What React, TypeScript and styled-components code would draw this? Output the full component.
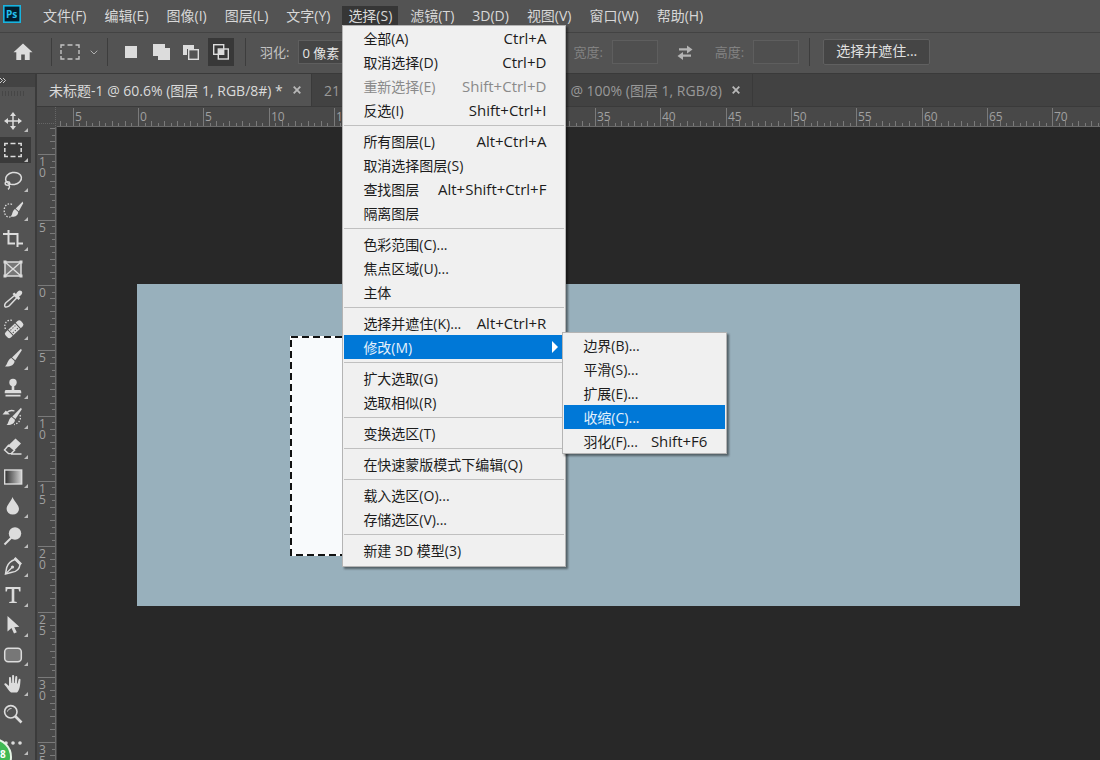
import React, { useEffect, useState } from "react";
import styled, { createGlobalStyle, css } from "styled-components";

const GlobalStyle = createGlobalStyle`
  *, *::before, *::after { box-sizing: border-box; }
  body {
    margin: 0;
    background: #282828;
    font-family: "Open Sans", "Noto Sans CJK SC", sans-serif;
    font-size: 14px;
    color: #d8d8d8;
  }
  button, input { font: inherit; color: inherit; }
  button { background: none; border: 0; padding: 0; margin: 0; }
`;

const App = styled.div`
  display: flex;
  flex-direction: column;
  height: 100vh;
  overflow: hidden;
`;

/* ---------- menu bar ---------- */

const MenuBar = styled.nav`
  display: flex;
  align-items: flex-end;
  height: 33px;
  flex: none;
  gap: 6px;
  padding: 0 4px 7px 3px;
  background: #535353;
  border-bottom: 1px solid #434343;
`;

const Logo = styled.svg`
  display: block;
  width: 18px;
  height: 18px;
  margin: 0 10px 2px 0;
`;

const MenuSlot = styled.div`
  position: relative;
`;

const MenuTitle = styled.button<{ $open?: boolean }>`
  display: block;
  height: 19px;
  padding: 0 6px;
  line-height: 16px;
  white-space: nowrap;
  background: ${(p) => (p.$open ? "#363636" : "transparent")};
`;

const MenuPanel = styled.div`
  position: absolute;
  z-index: 10;
  top: 19px;
  left: 0;
  width: 224px;
  padding: 0 1px 4px;
  background: #f0f0f0;
  border: 1px solid #b4b4b4;
  box-shadow: 2px 2px 2px rgba(0, 0, 0, 0.45);
  color: #1c1c1c;
`;

const SubPanel = styled(MenuPanel)`
  top: -3px;
  left: 218px;
  width: 165px;
  padding: 0 1px;
`;

const ItemSlot = styled.div`
  position: relative;
`;

const MenuItem = styled.button<{ $active?: boolean }>`
  display: flex;
  justify-content: space-between;
  align-items: center;
  width: 100%;
  height: 24px;
  padding: 0 18px 0 19px;
  white-space: nowrap;
  text-align: left;
  &:disabled { color: #8a8a8a; }
  ${(p) =>
    p.$active &&
    css`
      background: #0078d7;
      color: #e4f1fc;
    `}
`;

const Shortcut = styled.kbd`
  font: inherit;
  font-size: 15px;
`;

const Arrow = styled.svg`
  display: block;
  width: 6px;
  height: 12px;
  margin-right: -12px;
  fill: #fff;
`;

const MenuRule = styled.hr`
  height: 1px;
  margin: 3px 0;
  border: 0;
  background: #c0c0c0;
`;

/* ---------- options bar ---------- */

const OptionsBar = styled.div`
  display: flex;
  align-items: center;
  flex: none;
  height: 41px;
  padding: 0 0 2px 10px;
  background: #535353;
  border-bottom: 1px solid #3a3a3a;
  white-space: nowrap;
`;

const Divider = styled.span<{ $before: number; $after: number }>`
  width: 1px;
  height: 28px;
  margin: 0 ${(p) => p.$after}px 0 ${(p) => p.$before}px;
  background: #3d3d3d;
`;

const IconButton = styled.button<{ $on?: boolean; $narrow?: boolean }>`
  display: grid;
  place-items: center;
  width: ${(p) => (p.$narrow ? 22 : 26)}px;
  height: 28px;
  background: ${(p) => (p.$on ? "#383838" : "transparent")};
`;

const ModeGroup = styled.div`
  display: flex;
  gap: 4px;
`;

const SwapSlot = styled.div`
  padding: 0 17px 0 14px;
`;

const Field = styled.label<{ $dim?: boolean }>`
  display: flex;
  align-items: center;
  gap: 9px;
  font-size: 13px;
  line-height: 16px;
  color: ${(p) => (p.$dim ? "#828282" : "#c4c4c4")};
`;

const FieldInput = styled.input<{ $w: number }>`
  width: ${(p) => p.$w}px;
  height: 24px;
  padding: 0 3px;
  font-size: 13px;
  color: #e6e6e6;
  background: ${(p) => (p.disabled ? "#4f4f4f" : "#454545")};
  border: 1px solid #5e5e5e;
  border-radius: 0;
`;

const FeatherGap = styled.span`
  width: 215px;
`;

const MaskButton = styled.button`
  height: 26px;
  padding: 0 12px 2px;
  line-height: 20px;
  color: #e0e0e0;
  background: #454545;
  border: 1px solid #606060;
  border-radius: 2px;
`;

/* ---------- workspace ---------- */

const Workspace = styled.div`
  display: flex;
  flex: 1;
  min-height: 0;
`;

const ToolColumn = styled.aside`
  position: relative;
  display: flex;
  flex-direction: column;
  flex: none;
  width: 37px;
  background: #535353;
  border-right: 2px solid #3b3b3b;
`;

const ToolHeader = styled.div`
  height: 13px;
  background: #434343;
`;

const Grip = styled.div`
  width: 23px;
  height: 5px;
  margin: 4px 0 10px 2px;
  background: repeating-linear-gradient(90deg, #464646 0 1px, #535353 1px 3px);
`;

const Tool = styled.button<{ $on?: boolean }>`
  position: relative;
  display: grid;
  place-items: center;
  flex: none;
  width: 31px;
  height: 30px;
  padding-right: 5px;
  &:nth-of-type(3n + 1) { height: 29px; }
  ${(p) =>
    p.$on &&
    css`
      background: linear-gradient(#3a3a3a, #3a3a3a) 0 2px / 100% 26px no-repeat;
    `}
`;

const Corner = styled.i`
  position: absolute;
  right: 3px;
  bottom: 3px;
  border: 2px solid transparent;
  border-right-color: #bdbdbd;
  border-bottom-color: #bdbdbd;
`;

const Badge = styled.div`
  position: absolute;
  left: -26px;
  bottom: -16px;
  width: 38px;
  height: 38px;
  padding: 5px 0 0 24px;
  border: 2px solid #e6f5e6;
  border-radius: 50%;
  background: #3fba55;
  font-size: 10px;
  font-weight: 700;
  line-height: 18px;
  color: #fff;
`;

const Documents = styled.main`
  display: flex;
  flex-direction: column;
  flex: 1;
  min-width: 0;
`;

const Tabs = styled.div`
  display: flex;
  flex: none;
  height: 33px;
  background: #424242;
  border-bottom: 1px solid #3a3a3a;
`;

const Tab = styled.div<{ $on?: boolean; $w: number }>`
  display: flex;
  align-items: center;
  flex: none;
  width: ${(p) => p.$w}px;
  padding: 0 12px;
  gap: 10px;
  white-space: nowrap;
  border-right: 1px solid #3a3a3a;
  color: ${(p) => (p.$on ? "#dadada" : "#999")};
  background: ${(p) => (p.$on ? "#535353" : "transparent")};
`;

const TabText = styled.span`
  flex: none;
`;

const TabSpacer = styled.span`
  flex: 1;
`;

const CloseButton = styled.button`
  display: block;
  flex: none;
  color: #b8b8b8;
`;

const RulerTop = styled.svg`
  display: block;
  flex: none;
  width: 100%;
  height: 20px;
  background: #484848;
`;

const CanvasRow = styled.div`
  display: flex;
  flex: 1;
  min-height: 0;
`;

const RulerSide = styled.svg`
  display: block;
  flex: none;
  width: 20px;
  height: 100%;
  background: #484848;
`;

const Canvas = styled.div`
  flex: 1;
  padding: 157px 80px 0;
  background: #282828;
`;

const Artboard = styled.div`
  height: 322px;
  padding: 52px 0 0 153px;
  background: #98b0bc;
`;

const Selection = styled.svg`
  display: block;
  width: 240px;
  height: 220px;
`;

/* ---------- rulers ---------- */

const STEP = 65.3;
const TICK = "#7a7a7a";
const LABEL = "#a0a0a0";

function useWindowSize() {
  const [size, setSize] = useState({ w: window.innerWidth, h: window.innerHeight });
  useEffect(() => {
    const update = () => setSize({ w: window.innerWidth, h: window.innerHeight });
    window.addEventListener("resize", update);
    return () => window.removeEventListener("resize", update);
  }, []);
  return size;
}

function TopRuler({ length }: { length: number }) {
  const zero = 101;
  const ticks: React.ReactNode[] = [];
  for (let i = -12; zero + (i * STEP) / 10 < length; i++) {
    const x = Math.round(zero + (i * STEP) / 10);
    const major = i % 10 === 0;
    const top = major ? 1 : i % 2 === 0 ? 14 : 16;
    ticks.push(<rect key={i} x={x} y={top} width="1" height={19 - top} fill={TICK} />);
    if (major)
      ticks.push(
        <text key={"t" + i} x={x + 2} y="14" fontSize="12" fill={LABEL}>
          {Math.abs(i / 2)}
        </text>
      );
  }
  return (
    <RulerTop aria-hidden="true">
      {ticks}
      <path d="M18.5 0v20M0 16.5h20" stroke="#666" strokeDasharray="1 1" />
      <rect x="20" y="19" width="100%" height="1" fill="#6a6a6a" />
    </RulerTop>
  );
}

function SideRuler({ length }: { length: number }) {
  const zero = 158;
  const marks: React.ReactNode[] = [];
  for (let i = -24; zero + (i * STEP) / 10 < length; i++) {
    const y = Math.round(zero + (i * STEP) / 10);
    const major = i % 10 === 0;
    const left = major ? 1 : i % 2 === 0 ? 13 : 15;
    marks.push(<rect key={i} x={left} y={y} width={18 - left} height="1" fill={TICK} />);
    if (major)
      String(Math.abs(i / 2))
        .split("")
        .forEach((c, k) =>
          marks.push(
            <text key={i + "t" + k} x="2" y={y + 12 + k * 11} fontSize="12" fill={LABEL}>
              {c}
            </text>
          )
        );
  }
  return (
    <RulerSide aria-hidden="true">
      {marks}
      <rect x="18" y="0" width="1" height="100%" fill="#6a6a6a" />
    </RulerSide>
  );
}

/* ---------- tool icons ---------- */

const I = "#dcdcdc";

const tools: { name: string; art: React.ReactNode; flat?: boolean; on?: boolean }[] = [
  {
    name: "移动工具",
    art: (
      <>
        <path d="M10 3v14M3 10h14" stroke={I} strokeWidth="1.5" />
        <path d="M10 1l3 4H7zM10 19l3-4H7zM1 10l4-3v6zM19 10l-4-3v6z" fill={I} />
      </>
    ),
  },
  {
    name: "矩形选框工具",
    on: true,
    art: (
      <path
        d="M1.800 6V3.500H5M7.500 3.500h5M15 3.500h3.200V6M18.200 8v4M18.200 14v2.500H15M12.500 16.500h-5M5 16.500H1.800V14M1.800 12V8"
        stroke={I}
        strokeWidth="1.500"
        fill="none"
      />
    ),
  },
  {
    name: "套索工具",
    art: (
      <g stroke={I} strokeWidth="1.5" fill="none">
        <ellipse cx="10.500" cy="8.500" rx="8" ry="6" transform="rotate(-10 10.500 8.500)" />
        <ellipse cx="4.500" cy="13.500" rx="2.300" ry="1.700" />
        <path d="M5.500 15c1.500 1 1.300 3-.5 4.300" />
      </g>
    ),
  },
  {
    name: "快速选择工具",
    art: (
      <>
        <path d="M9 4.500C5 2.500 1.200 5.500 1.200 10.500S5 18.500 8 16.500" stroke={I} strokeWidth="1.300" strokeDasharray="1.500 1.500" fill="none" />
        <path d="M19.800 1.500l.3 2-4.300 7.800-3.100-2.800z" fill={I} />
        <path d="M12 9l3.200 2.900c0 3.800-4 5.600-7.700 4.600 2.200-1.700 1.500-5.500 4.500-7.500z" fill={I} />
      </>
    ),
  },
  {
    name: "裁剪工具",
    art: <path d="M0 5h14.500v13M5.500 1v13.500H12M15 14.500h5" stroke={I} strokeWidth="2" fill="none" />,
  },
  {
    name: "图框工具",
    flat: true,
    art: (
      <>
        <rect x="2" y="3" width="16" height="14" fill="#777" stroke={I} strokeWidth="1.500" />
        <path d="M2 3l16 14M18 3L2 17" stroke={I} strokeWidth="1.400" />
        <path d="M0.500 1.500h3v3h-3zM16.500 1.500h3v3h-3zM0.500 15.500h3v3h-3zM16.500 15.500h3v3h-3z" fill={I} />
      </>
    ),
  },
  {
    name: "吸管工具",
    art: (
      <>
        <path d="M11.500 6.500l2.300 2.300-7.500 8c-1 1-3.500 1.600-4.300.9-.8-.8-.1-3 .9-4z" fill="none" stroke={I} strokeWidth="1.500" />
        <path d="M9.500 5l1.700-1.500L13 5c1.500-3 3.500-4.500 5.500-3 1.600 1.700.5 4-2.500 5.500l1.200 1.800-1.700 1.700z" fill={I} />
      </>
    ),
  },
  {
    name: "污点修复画笔工具",
    art: (
      <>
        <path d="M2.500 11C0 6 4.500.5 9.500 2.500" stroke={I} strokeWidth="1.300" strokeDasharray="1.500 1.500" fill="none" />
        <g transform="rotate(-43 11 11)">
          <rect x="0.500" y="7.500" width="21" height="7.500" rx="2.500" fill={I} />
          <path d="M6 7v8.500M16 7v8.500" stroke="#535353" strokeWidth="1" />
          <path d="M7.500 9.500h7M7.500 13h7" stroke="#535353" strokeWidth="1" strokeDasharray="1.300 1.500" />
        </g>
      </>
    ),
  },
  {
    name: "画笔工具",
    art: (
      <>
        <path d="M18 .8l.8 1.500-6.500 10-3.300-2.900z" fill={I} />
        <path d="M8.300 10.100l3.200 2.800c.3 3.800-4.500 6.100-9.500 5.600 2.800-2 2.300-6.700 6.300-8.400z" fill={I} />
      </>
    ),
  },
  {
    name: "仿制图章工具",
    art: (
      <>
        <circle cx="10" cy="4.500" r="3.700" fill={I} />
        <path d="M8.700 7h2.600v5H17c1 0 1.300 1 1.300 3.300H1.700C1.700 13 2 12 3 12h5.700zM2.500 16.800h15v1.700h-15z" fill={I} />
      </>
    ),
  },
  {
    name: "历史记录画笔工具",
    art: (
      <>
        <path d="M-.5 7.500l3.300-4 4 4z" fill={I} />
        <path d="M4 5.500c2-2 5-2.300 7.500-1.500" stroke={I} strokeWidth="1.300" fill="none" />
        <path d="M17 8c1.500 4-1 8.500-6 9.500" stroke={I} strokeWidth="1.300" strokeDasharray="1.500 1.500" fill="none" />
        <path d="M18 .8l.8 1.400-6.300 9.900-3.200-2.700z" fill={I} />
        <path d="M8.700 10l3.200 2.800c.2 3.800-4.400 5.700-8.400 5.200 2.500-2 1.700-6.200 5.200-8z" fill={I} />
      </>
    ),
  },
  {
    name: "橡皮擦工具",
    art: (
      <>
        <path d="M12.500 1.500l5.500 5-6.500 6.800-6-5z" fill={I} />
        <path d="M5.500 8.300l6 5-3.200 3.300H5.500l-4-3.600zM8 17h10.500" fill="none" stroke={I} strokeWidth="1.400" />
      </>
    ),
  },
  {
    name: "渐变工具",
    art: (
      <>
        <defs>
          <linearGradient id="toolGradient">
            <stop offset="0" stopColor="#2d2d2d" />
            <stop offset="1" stopColor="#d4d4d4" />
          </linearGradient>
        </defs>
        <rect x="1.700" y="3" width="17" height="14" fill="url(#toolGradient)" stroke={I} strokeWidth="1.400" />
      </>
    ),
  },
  { name: "模糊工具", art: <path d="M9.500 1c1.800 4.500 6.500 8 6.500 12a6.200 5.500 0 0 1-12.400 0C3.600 9 8 5.500 9.500 1z" fill={I} /> },
  {
    name: "减淡工具",
    art: (
      <>
        <circle cx="12" cy="7.500" r="6.200" fill={I} />
        <path d="M8.500 11.500L1.500 18.500" stroke={I} strokeWidth="2" />
      </>
    ),
  },
  {
    name: "钢笔工具",
    art: (
      <>
        <path d="M12 3.500l5 5c-.5 4.500-3.500 7.300-8 7.800L2.500 18l1.200-6.500c1.300-4 4.300-6.800 8.300-8z" fill="none" stroke={I} strokeWidth="1.500" />
        <path d="M12.500 1l6.500 6.500-1.700 1.700-6.500-6.500z" fill={I} />
        <path d="M3 17.500l6-6" stroke={I} strokeWidth="1.200" />
        <circle cx="9.500" cy="11" r="1.600" fill={I} />
      </>
    ),
  },
  {
    name: "文字工具",
    art: <path d="M2.500 2h15v4.500h-1.300l-.7-2.600h-4.200v12.600l2.500.5V18H6.200v-1l2.500-.5V3.900H4.500l-.7 2.600H2.500z" fill={I} />,
  },
  { name: "路径选择工具", art: <path d="M4.500 1v15.500l4-3.500 2.500 5.500 2.800-1.300-2.500-5 5-.5z" fill={I} /> },
  {
    name: "圆角矩形工具",
    art: <rect x="1.700" y="3.200" width="16.600" height="13.600" rx="3.500" fill="#777" stroke={I} strokeWidth="1.500" />,
  },
  {
    name: "抓手工具",
    art: (
      <path
        d="M8 18.500C5.500 17 4 13 1.500 10.700c-.8-1 .5-2 1.600-1.300L6 12V4c0-1.400 1.900-1.400 2 0l.5 5h.6V2c0-1.400 2-1.400 2 0v7h.6l.6-6c.1-1.300 2-1.200 2 .2L14 9.500h.6l1-4c.4-1.200 2-.9 1.900.4-.3 4.600-.5 9.600-3.500 12.600z"
        fill={I}
      />
    ),
  },
  {
    name: "缩放工具",
    flat: true,
    art: (
      <>
        <circle cx="7.800" cy="7.800" r="6.200" fill="none" stroke={I} strokeWidth="1.600" />
        <path d="M4.500 7.500c.5-2 2-3 4-3" stroke={I} fill="none" />
        <path d="M12 12l6.500 6.500" stroke={I} strokeWidth="2.600" />
      </>
    ),
  },
  {
    name: "编辑工具栏",
    art: (
      <>
        <circle cx="3" cy="9" r="1.800" fill={I} />
        <circle cx="10" cy="9" r="1.800" fill={I} />
        <circle cx="17" cy="9" r="1.800" fill={I} />
      </>
    ),
  },
];

/* ---------- menu data ---------- */

type Entry = { label: string; keys?: string; off?: boolean; sub?: Entry[]; active?: boolean } | null;

const selectMenu: Entry[] = [
  { label: "全部(A)", keys: "Ctrl+A" },
  { label: "取消选择(D)", keys: "Ctrl+D" },
  { label: "重新选择(E)", keys: "Shift+Ctrl+D", off: true },
  { label: "反选(I)", keys: "Shift+Ctrl+I" },
  null,
  { label: "所有图层(L)", keys: "Alt+Ctrl+A" },
  { label: "取消选择图层(S)" },
  { label: "查找图层", keys: "Alt+Shift+Ctrl+F" },
  { label: "隔离图层" },
  null,
  { label: "色彩范围(C)..." },
  { label: "焦点区域(U)..." },
  { label: "主体" },
  null,
  { label: "选择并遮住(K)...", keys: "Alt+Ctrl+R" },
  {
    label: "修改(M)",
    active: true,
    sub: [
      { label: "边界(B)..." },
      { label: "平滑(S)..." },
      { label: "扩展(E)..." },
      { label: "收缩(C)...", active: true },
      { label: "羽化(F)...", keys: "Shift+F6" },
    ],
  },
  null,
  { label: "扩大选取(G)" },
  { label: "选取相似(R)" },
  null,
  { label: "变换选区(T)" },
  null,
  { label: "在快速蒙版模式下编辑(Q)" },
  null,
  { label: "载入选区(O)..." },
  { label: "存储选区(V)..." },
  null,
  { label: "新建 3D 模型(3)" },
];

const titles = [
  "文件(F)", "编辑(E)", "图像(I)", "图层(L)", "文字(Y)", "选择(S)",
  "滤镜(T)", "3D(D)", "视图(V)", "窗口(W)", "帮助(H)",
];

function Entries({ list }: { list: Entry[] }) {
  return (
    <>
      {list.map((e, i) =>
        e === null ? (
          <MenuRule key={i} />
        ) : (
          <ItemSlot key={i}>
            <MenuItem $active={e.active} disabled={e.off}>
              <span>{e.label}</span>
              {e.keys && <Shortcut>{e.keys}</Shortcut>}
              {e.sub && (
                <Arrow viewBox="0 0 6 12">
                  <path d="M0 0l6 6-6 6z" />
                </Arrow>
              )}
            </MenuItem>
            {e.sub && (
              <SubPanel>
                <Entries list={e.sub} />
              </SubPanel>
            )}
          </ItemSlot>
        )
      )}
    </>
  );
}

function Close() {
  return (
    <CloseButton aria-label="关闭">
      <svg width="8" height="8" viewBox="0 0 8 8" display="block">
        <path d="M.7.7l6.600 6.600M7.300.7L.7 7.300" stroke="currentColor" strokeWidth="1.800" />
      </svg>
    </CloseButton>
  );
}

export default function Photoshop() {
  const { w, h } = useWindowSize();
  return (
    <App>
      <GlobalStyle />
      <MenuBar>
        <Logo viewBox="0 0 18 18">
          <rect x=".8" y=".8" width="16.400" height="16.400" fill="#001d2e" stroke="#18b4e0" strokeWidth="1.600" />
          <text x="3" y="13" fontSize="10" fontWeight="700" fill="#25c0ee">Ps</text>
        </Logo>
        {titles.map((t) => (
          <MenuSlot key={t}>
            <MenuTitle $open={t === "选择(S)"}>{t}</MenuTitle>
            {t === "选择(S)" && (
              <MenuPanel>
                <Entries list={selectMenu} />
              </MenuPanel>
            )}
          </MenuSlot>
        ))}
      </MenuBar>

      <OptionsBar>
        <IconButton aria-label="主页">
          <svg width="20" height="18" viewBox="0 0 20 18">
            <path d="M10 .5L.5 9.300h2.800V17h4.900v-5.500h3.600V17h4.900V9.300h2.800z" fill={I} />
          </svg>
        </IconButton>
        <Divider $before={15} $after={5} />
        <IconButton aria-label="矩形选框工具">
          <svg width="20" height="16" viewBox="0 0 20 16">
            <path
              d="M1 4V1h3.500M7.500 1h5M15.500 1H19v3M19 6v4M19 12v3h-3.500M12.500 15h-5M4.500 15H1v-3M1 10V6"
              stroke="#c4c4c4"
              strokeWidth="1.400"
              fill="none"
            />
          </svg>
        </IconButton>
        <IconButton aria-label="工具预设" $narrow>
          <svg width="8" height="5" viewBox="0 0 8 5">
            <path d="M.7.7L4 4 7.300.7" stroke="#b0b0b0" fill="none" />
          </svg>
        </IconButton>
        <Divider $before={2} $after={10} />
        <ModeGroup>
          <IconButton aria-label="新选区">
            <svg width="12" height="12"><rect width="12" height="12" fill={I} /></svg>
          </IconButton>
          <IconButton aria-label="添加到选区">
            <svg width="17" height="16"><path d="M0 0h12v4h5v12H5v-4H0z" fill={I} /></svg>
          </IconButton>
          <IconButton aria-label="从选区减去">
            <svg width="16" height="15" viewBox="0 0 16 15">
              <path d="M0 0h11v4H4v6H0z" fill={I} />
              <rect x="5.700" y="4.700" width="9.600" height="9.600" fill="none" stroke={I} strokeWidth="1.400" />
            </svg>
          </IconButton>
          <IconButton aria-label="与选区交叉" $on>
            <svg width="16" height="16" viewBox="0 0 16 16" fill="none" stroke={I} strokeWidth="1.400">
              <rect x=".7" y=".7" width="10" height="9.600" />
              <rect x="5.300" y="5" width="10" height="10" />
              <rect x="6.500" y="6" width="3.500" height="3.500" fill={I} />
            </svg>
          </IconButton>
        </ModeGroup>
        <Divider $before={11} $after={14} />
        <Field>
          羽化:
          <FieldInput $w={60} defaultValue="0 像素" />
        </Field>
        <FeatherGap />
        <Field $dim>
          宽度:
          <FieldInput $w={46} disabled />
        </Field>
        <SwapSlot>
          <IconButton aria-label="交换宽高">
            <svg width="16" height="15" viewBox="0 0 16 15" fill="#b4b4b4">
              <path d="M2 3.300h8V.5l5.500 4-5.500 4V5.500H2zM14 9.500H6V7L.5 11 6 15v-3.300h8z" />
            </svg>
          </IconButton>
        </SwapSlot>
        <Field $dim>
          高度:
          <FieldInput $w={46} disabled />
        </Field>
        <Divider $before={10} $after={13} />
        <MaskButton>选择并遮住...</MaskButton>
      </OptionsBar>

      <Workspace>
        <ToolColumn>
          <ToolHeader>
            <svg width="8" height="13" viewBox="0 0 8 13" display="block">
              <path d="M0 4l2.500 2.500L0 9M3 4l2.500 2.500L3 9" stroke="#ccc" fill="none" />
            </svg>
          </ToolHeader>
          <Grip />
          {tools.map((t) => (
            <Tool key={t.name} aria-label={t.name} $on={t.on}>
              <svg width="20" height="20" viewBox="0 0 20 20" overflow="visible">{t.art}</svg>
              {!t.flat && <Corner />}
            </Tool>
          ))}
          <Badge>8</Badge>
        </ToolColumn>

        <Documents>
          <Tabs>
            <Tab $on $w={275}>
              <TabText>未标题-1 @ 60.6% (图层 1, RGB/8#) *</TabText>
              <Close />
            </Tab>
            <Tab $w={441}>
              <TabText>21</TabText>
              <TabSpacer />
              <TabText>@ 100% (图层 1, RGB/8)</TabText>
              <Close />
            </Tab>
          </Tabs>
          <TopRuler length={w - 37} />
          <CanvasRow>
            <SideRuler length={h - 127} />
            <Canvas>
              <Artboard>
                <Selection viewBox="0 0 240 220">
                  <rect width="240" height="220" fill="#f8fafc" />
                  <rect x="1" y="1" width="238" height="218" fill="none" stroke="#fff" strokeWidth="2" />
                  <rect x="1" y="1" width="238" height="218" fill="none" stroke="#111" strokeWidth="2" strokeDasharray="7 4" />
                </Selection>
              </Artboard>
            </Canvas>
          </CanvasRow>
        </Documents>
      </Workspace>
    </App>
  );
}
